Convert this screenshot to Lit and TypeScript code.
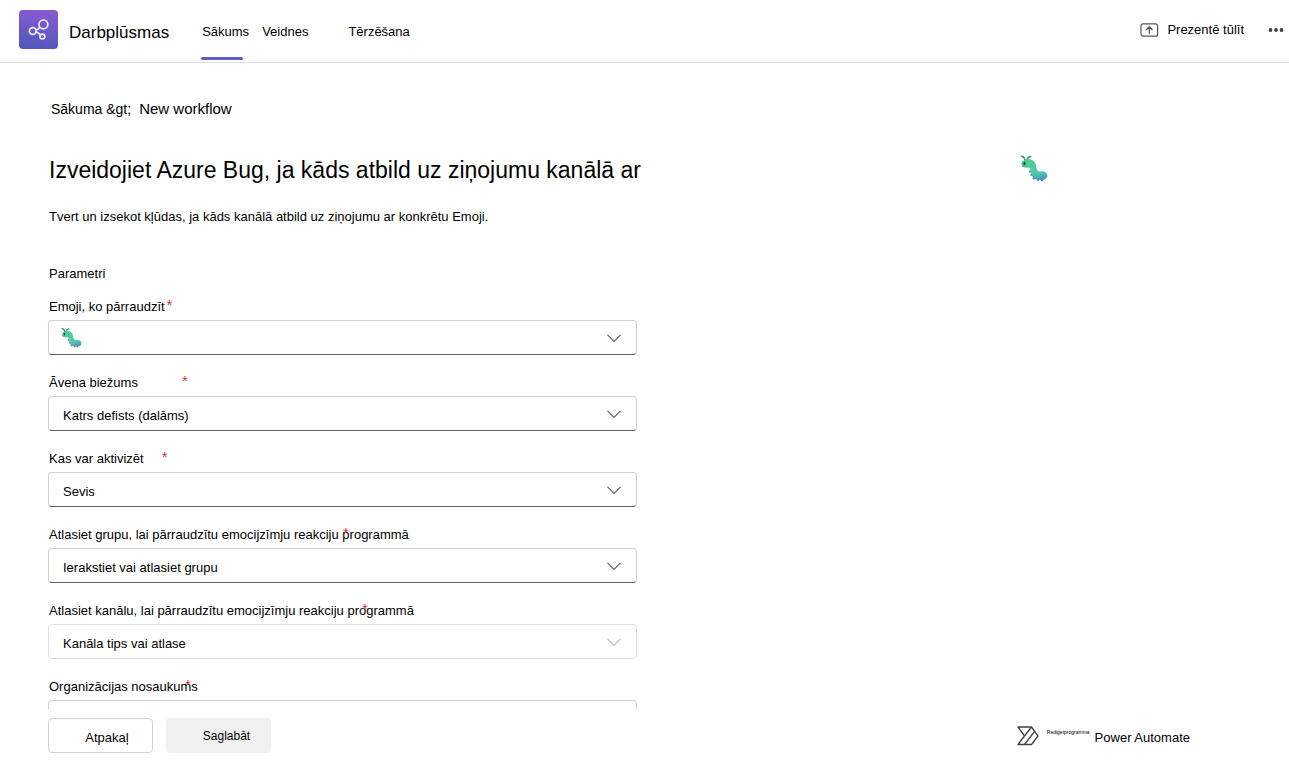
import { LitElement, html, css, svg, nothing } from "lit";
import { customElement } from "lit/decorators.js";
import { classMap } from "lit/directives/class-map.js";

interface Field {
  id: string;
  label: string;
  value: string;
  mark: string;
  overlap?: number;
  emoji?: boolean;
  disabled?: boolean;
}

const FIELDS: Field[] = [
  { id: "emoji", label: "Emoji, ko pārraudzīt", value: "", mark: "near", emoji: true },
  { id: "frequency", label: "Āvena biežums", value: "Katrs defists (dalāms)", mark: "far" },
  { id: "who", label: "Kas var aktivizēt", value: "Sevis", mark: "mid" },
  { id: "group", label: "Atlasiet grupu, lai pārraudzītu emocijzīmju reakciju programmā", value: "Ierakstiet vai atlasiet grupu", mark: "over", overlap: 60 },
  { id: "channel", label: "Atlasiet kanālu, lai pārraudzītu emocijzīmju reakciju programmā", value: "Kanāla tips vai atlase", mark: "over", overlap: 46, disabled: true },
  { id: "org", label: "Organizācijas nosaukums", value: "", mark: "over", overlap: 7 },
];

@customElement("bug-icon")
class BugIcon extends LitElement {
  static styles = css`
    :host { display: block; line-height: 0; }
    svg { width: 100%; height: auto; display: block; }
  `;
  render() {
    return html`<svg viewBox="0 0 28 28" aria-hidden="true">
      <defs>
        <linearGradient id="body" x1="0.3" y1="0" x2="0.5" y2="1">
          <stop offset="0" stop-color="#45cf8d" />
          <stop offset="0.7" stop-color="#50cba2" />
          <stop offset="1" stop-color="#4f95bd" />
        </linearGradient>
      </defs>
      ${svg`
        <path d="M5 6C4.6 3.6 3.400 2.400 1.500 2.200M7 6C7.600 3.800 9 2.400 10.600 2.400" fill="none" stroke="#2f8f7c" stroke-width="1.500" stroke-linecap="round" />
        <g fill="#4a78a8">
          <circle cx="10" cy="17.500" r="1.100" /><circle cx="11.500" cy="21" r="1.100" />
          <circle cx="14" cy="24.300" r="1.200" /><circle cx="18" cy="26" r="1.100" />
          <circle cx="22" cy="26.200" r="1.100" />
        </g>
        <path d="M6.500 5.500C11 4.300 15.400 7 15.800 11C16.200 14.500 17 17.200 19.500 17.600C23 16.600 27.300 18 27.300 21.500C27.300 25 24 26.200 20 26C13.500 25.800 11 21.500 10.600 17C10.400 15 10 13.700 8.500 13.600C4.500 14.500 1.400 12.800 1.400 9.800C1.400 7.500 3.500 5.800 6.500 5.500Z" fill="url(#body)" />
        <ellipse cx="4.500" cy="9.400" rx="1" ry="1.900" fill="#31374f" />
        <circle cx="2.800" cy="12" r="1" fill="#7d86b8" />
      `}
    </svg>`;
  }
}

@customElement("app-root")
class AppRoot extends LitElement {
  static styles = css`
    :host {
      display: flex;
      flex-direction: column;
      height: 100vh;
      overflow: hidden;
      background: #fff;
      color: #000;
      font: 13px/20px "Liberation Sans", Arial, sans-serif;
    }
    * { box-sizing: border-box; }
    header {
      display: flex;
      align-items: stretch;
      flex: none;
      height: 63px;
      padding: 0 5px 0 19px;
      border-bottom: 1px solid #e0e0e0;
    }
    .logo { width: 39px; height: 39px; margin: 10px 11px 0 0; flex: none; }
    .app-name { font-size: 17px; font-weight: 400; line-height: 20px; margin: 23px 32px 0 0; }
    nav { display: flex; }
    .tab {
      position: relative;
      color: inherit;
      text-decoration: none;
      padding: 22px 0 0 1px;
      margin-right: 12px;
    }
    .tab.spaced { margin-left: 27px; }
    .tab.active::after {
      content: "";
      position: absolute;
      left: 0;
      bottom: 2px;
      width: 42px;
      height: 3px;
      border-radius: 2px;
      background: #5b5fc7;
    }
    .actions { display: flex; align-items: center; margin: 0 0 3px auto; gap: 24px; }
    button { font: inherit; color: inherit; cursor: pointer; }
    .plain { display: flex; align-items: center; gap: 8px; padding: 0; border: 0; background: none; }
    .plain svg, .logo { display: block; }
    main { flex: 1; min-height: 0; overflow: hidden; padding: 36px 48px 0; }
    .crumbs { display: flex; gap: 8px; padding-left: 3px; font-size: 14px; }
    .crumbs a { color: inherit; text-decoration: none; }
    .crumbs .here { font-size: 15px; }
    .intro { display: grid; grid-template-columns: minmax(0, 1fr) 221px; margin-top: 35px; }
    h1 { margin: 0; padding-left: 1px; font-size: 23px; font-weight: 400; line-height: 32px; }
    .hero { width: 28px; }
    .desc { margin: 21px 0 0; padding-left: 1px; }
    h2 { margin: 37px 0 0; padding-left: 1px; font-size: 13px; line-height: 20px; font-weight: 400; }
    form { width: 50%; max-width: 589px; min-width: 280px; margin-top: 13px; display: grid; gap: 18px; }
    .field { display: grid; gap: 3px; }
    .label { display: flex; padding-left: 1px; }
    .label label { position: relative; white-space: nowrap; }
    .star { color: #d13438; font-size: 15px; line-height: 16px; }
    .near { margin-left: 2px; }
    .mid { margin-left: 18px; }
    .far { margin-left: 44px; }
    .over { position: absolute; top: 0; }
    .box { position: relative; }
    select, input {
      display: block;
      width: 100%;
      height: 35px;
      padding: 5px 40px 0 14px;
      border: 1px solid #d1d1d1;
      border-bottom-color: #616161;
      border-radius: 4px;
      background: #fff;
      color: #000;
      font: inherit;
      appearance: none;
    }
    select:disabled { border-color: #e0e0e0; opacity: 1; }
    .chevron { position: absolute; right: 16px; top: 14px; color: #616161; pointer-events: none; }
    .muted .chevron { color: #bdbdbd; }
    .picked { position: absolute; left: 13px; top: 7px; width: 21px; pointer-events: none; }
    footer { flex: none; display: flex; align-items: center; gap: 13px; padding: 9px 99px 19px 48px; }
    .btn { width: 105px; height: 35px; padding: 4px 0 0 13px; border: 1px solid #d1d1d1; border-radius: 4px; background: #fff; }
    .btn.primary { border-color: #f0f0f0; background: #f0f0f0; font-size: 12px; padding: 0 0 0 16px; }
    .automate { display: flex; align-items: center; margin-left: auto; color: inherit; text-decoration: none; }
    .automate svg { margin-right: 8px; }
    .tiny { font-size: 5px; line-height: 8px; margin: 0 5px 8px 0; }
    .brand { padding-top: 4px; }
  `;

  private field(f: Field) {
    const over = f.overlap !== undefined;
    const star = html`<span class="star ${f.mark}" style=${over ? `right:${f.overlap}px` : nothing} aria-hidden="true">*</span>`;
    return html`<div class=${classMap({ field: true, muted: !!f.disabled })}>
      <div class="label"><label for=${f.id}>${f.label}${over ? star : nothing}</label>${over ? nothing : star}</div>
      <div class="box">
        ${f.id === "org"
          ? html`<input id=${f.id} type="text" required />`
          : html`<select id=${f.id} required ?disabled=${!!f.disabled}><option>${f.value}</option></select>
              <svg class="chevron" width="14" height="9" viewBox="0 0 14 9" fill="none" aria-hidden="true">
                <path d="M0.800 1.200L7 7.400L13.200 1.200" stroke="currentColor" stroke-width="1.200" stroke-linecap="round" />
              </svg>`}
        ${f.emoji ? html`<bug-icon class="picked"></bug-icon>` : nothing}
      </div>
    </div>`;
  }

  render() {
    return html`
      <header>
        <svg class="logo" viewBox="0 0 39 39" aria-hidden="true">
          <defs>
            <linearGradient id="g" x1="0.600" y1="0" x2="0.400" y2="1">
              <stop offset="0" stop-color="#8a5bd0" />
              <stop offset="1" stop-color="#4f58bd" />
            </linearGradient>
          </defs>
          <rect width="39" height="39" rx="4" fill="url(#g)" />
          <g fill="none" stroke="#f1ebfb" stroke-width="1.700">
            <circle cx="24.400" cy="14.400" r="4.400" />
            <circle cx="13.800" cy="21" r="3.400" />
            <circle cx="23.400" cy="26.600" r="2.400" />
            <path d="M16.900 19.800C18.800 19.800 19.800 18.800 20.900 17.200M16.700 22C18.800 22 20 23.200 21.400 25" />
          </g>
        </svg>
        <div class="app-name">Darbplūsmas</div>
        <nav>
          <a class="tab active" href="#home">Sākums</a>
          <a class="tab" href="#templates">Veidnes</a>
          <a class="tab spaced" href="#chat">Tērzēšana</a>
        </nav>
        <div class="actions">
          <button class="plain" type="button">
            <svg width="19" height="14" viewBox="0 0 19 14" fill="none" stroke="#555" stroke-width="1.200" aria-hidden="true">
              <rect x="1" y="0.800" width="16.600" height="12.400" rx="2" />
              <path d="M9.300 10.500V4M6.500 6.500L9.300 3.700L12.100 6.500" stroke-linecap="round" />
            </svg>
            Prezentē tūlīt
          </button>
          <button class="plain" type="button" aria-label="Citas opcijas">
            <svg width="16" height="6" viewBox="0 0 16 6" fill="#424242" aria-hidden="true">
              <circle cx="2.500" cy="3" r="1.900" /><circle cx="8" cy="3" r="1.900" /><circle cx="13.500" cy="3" r="1.900" />
            </svg>
          </button>
        </div>
      </header>
      <main>
        <div class="crumbs"><a href="#home">Sākuma &amp;gt;</a><span class="here">New workflow</span></div>
        <div class="intro">
          <h1>Izveidojiet Azure Bug, ja kāds atbild uz ziņojumu kanālā ar</h1>
          <bug-icon class="hero"></bug-icon>
        </div>
        <p class="desc">Tvert un izsekot kļūdas, ja kāds kanālā atbild uz ziņojumu ar konkrētu Emoji.</p>
        <h2>Parametri</h2>
        <form>${FIELDS.map((f) => this.field(f))}</form>
      </main>
      <footer>
        <button class="btn" type="button">Atpakaļ</button>
        <button class="btn primary" type="button">Saglabāt</button>
        <a class="automate" href="#power-automate">
          <svg width="22" height="20" viewBox="0 0 22 20" fill="none" stroke="#424242" stroke-width="1.300" stroke-linejoin="round" aria-hidden="true">
            <path d="M1 1H14.500L21 10L14.500 18.500H1L7.500 10Z" />
            <path d="M7.500 10L14.500 1M7.500 18.500L17.600 5.300" />
          </svg>
          <span class="tiny">Rediģetprogramma</span>
          <span class="brand">Power Automate</span>
        </a>
      </footer>
    `;
  }
}
